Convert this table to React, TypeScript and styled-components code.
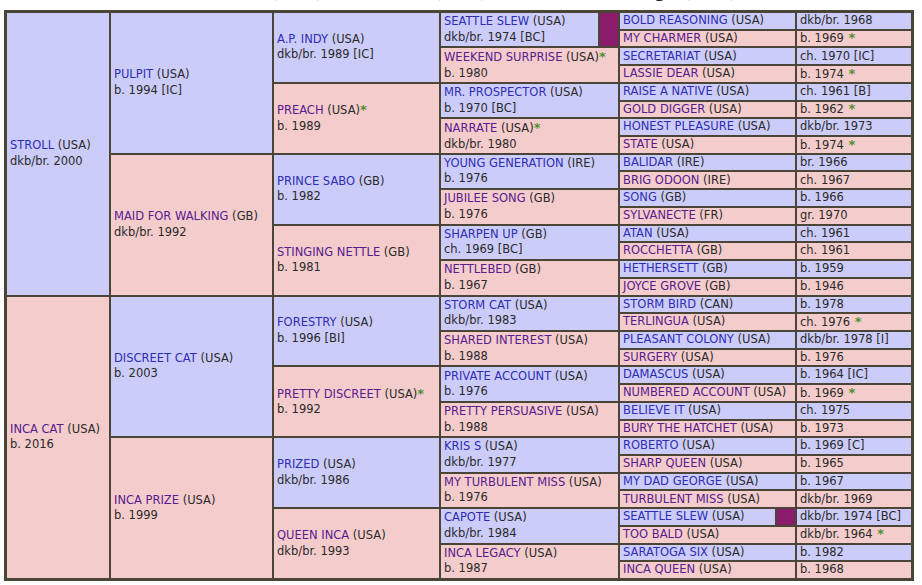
import React from 'react';
import styled, { createGlobalStyle } from 'styled-components';

type Horse = {
	name: string;
	country: string;
	info: string;
	flags: string;
	sire?: Horse;
	dam?: Horse;
};

const L = (name: string, country: string, info: string, flags = ''): Horse => ({ name, country, info, flags });
const H = (name: string, country: string, info: string, sire: Horse, dam: Horse, flags = ''): Horse => ({
	name,
	country,
	info,
	flags,
	sire,
	dam,
});

// column widths, one per generation (the last one is the leaf dates)
const WIDTHS = [102, 161, 165, 177, 175, 114];

const pedigree: Horse[] = [
	H('STROLL', 'USA', 'dkb/br. 2000',
		H('PULPIT', 'USA', 'b. 1994 [IC]',
			H('A.P. INDY', 'USA', 'dkb/br. 1989 [IC]',
				H('SEATTLE SLEW', 'USA', 'dkb/br. 1974 [BC]', L('BOLD REASONING', 'USA', 'dkb/br. 1968'), L('MY CHARMER', 'USA', 'b. 1969', 'i'), 'd'),
				H('WEEKEND SURPRISE', 'USA', 'b. 1980', L('SECRETARIAT', 'USA', 'ch. 1970 [IC]'), L('LASSIE DEAR', 'USA', 'b. 1974', 'i'), 'n')),
			H('PREACH', 'USA', 'b. 1989',
				H('MR. PROSPECTOR', 'USA', 'b. 1970 [BC]', L('RAISE A NATIVE', 'USA', 'ch. 1961 [B]'), L('GOLD DIGGER', 'USA', 'b. 1962', 'i')),
				H('NARRATE', 'USA', 'dkb/br. 1980', L('HONEST PLEASURE', 'USA', 'dkb/br. 1973'), L('STATE', 'USA', 'b. 1974', 'i'), 'n'),
				'n')),
		H('MAID FOR WALKING', 'GB', 'dkb/br. 1992',
			H('PRINCE SABO', 'GB', 'b. 1982',
				H('YOUNG GENERATION', 'IRE', 'b. 1976', L('BALIDAR', 'IRE', 'br. 1966'), L('BRIG ODOON', 'IRE', 'ch. 1967')),
				H('JUBILEE SONG', 'GB', 'b. 1976', L('SONG', 'GB', 'b. 1966'), L('SYLVANECTE', 'FR', 'gr. 1970'))),
			H('STINGING NETTLE', 'GB', 'b. 1981',
				H('SHARPEN UP', 'GB', 'ch. 1969 [BC]', L('ATAN', 'USA', 'ch. 1961'), L('ROCCHETTA', 'GB', 'ch. 1961')),
				H('NETTLEBED', 'GB', 'b. 1967', L('HETHERSETT', 'GB', 'b. 1959'), L('JOYCE GROVE', 'GB', 'b. 1946'))))),
	H('INCA CAT', 'USA', 'b. 2016',
		H('DISCREET CAT', 'USA', 'b. 2003',
			H('FORESTRY', 'USA', 'b. 1996 [BI]',
				H('STORM CAT', 'USA', 'dkb/br. 1983', L('STORM BIRD', 'CAN', 'b. 1978'), L('TERLINGUA', 'USA', 'ch. 1976', 'i')),
				H('SHARED INTEREST', 'USA', 'b. 1988', L('PLEASANT COLONY', 'USA', 'dkb/br. 1978 [I]'), L('SURGERY', 'USA', 'b. 1976'))),
			H('PRETTY DISCREET', 'USA', 'b. 1992',
				H('PRIVATE ACCOUNT', 'USA', 'b. 1976', L('DAMASCUS', 'USA', 'b. 1964 [IC]'), L('NUMBERED ACCOUNT', 'USA', 'b. 1969', 'i')),
				H('PRETTY PERSUASIVE', 'USA', 'b. 1988', L('BELIEVE IT', 'USA', 'ch. 1975'), L('BURY THE HATCHET', 'USA', 'b. 1973')),
				'n')),
		H('INCA PRIZE', 'USA', 'b. 1999',
			H('PRIZED', 'USA', 'dkb/br. 1986',
				H('KRIS S', 'USA', 'dkb/br. 1977', L('ROBERTO', 'USA', 'b. 1969 [C]'), L('SHARP QUEEN', 'USA', 'b. 1965')),
				H('MY TURBULENT MISS', 'USA', 'b. 1976', L('MY DAD GEORGE', 'USA', 'b. 1967'), L('TURBULENT MISS', 'USA', 'dkb/br. 1969'))),
			H('QUEEN INCA', 'USA', 'dkb/br. 1993',
				H('CAPOTE', 'USA', 'dkb/br. 1984', L('SEATTLE SLEW', 'USA', 'dkb/br. 1974 [BC]', 'd'), L('TOO BALD', 'USA', 'dkb/br. 1964', 'i')),
				H('INCA LEGACY', 'USA', 'b. 1987', L('SARATOGA SIX', 'USA', 'b. 1982'), L('INCA QUEEN', 'USA', 'b. 1968'))))),
];

const GlobalStyle = createGlobalStyle`
	html, body {
		margin: 0;
		padding: 0;
		background: #ffffff;
	}
	body {
		font-family: 'DejaVu Sans', Verdana, sans-serif;
		overflow: hidden;
	}
`;

const Page = styled.div`
	width: 922px;
	height: 585px;
	overflow: hidden;
`;

// heading sits mostly above the viewport, only its descenders peek in
const Title = styled.h1`
	margin: -21px 0 0;
	height: 20px;
	font-family: 'Liberation Serif', 'Times New Roman', serif;
	font-size: 20px;
	line-height: 20px;
	font-weight: bold;
	text-align: center;
	color: #222;
	white-space: nowrap;
`;

const Table = styled.div`
	display: flex;
	flex-direction: column;
	gap: 2px;
	box-sizing: border-box;
	width: 910px;
	height: 571px;
	margin: 11px 0 0 4px;
	border: 3px solid #4b4538;
	background: #4b4538;
	font-size: 11.5px;
	line-height: 15.5px;
	color: #2a2a2a;
`;

const Row = styled.div`
	display: flex;
	gap: 2px;
	flex: 1 1 0;
	min-height: 0;
`;

const Parents = styled.div`
	display: flex;
	flex-direction: column;
	gap: 2px;
`;

const Cell = styled.div<{ $w?: number; $dam: boolean }>`
	display: flex;
	flex-direction: column;
	justify-content: center;
	box-sizing: border-box;
	${p => (p.$w ? `width: ${p.$w}px;` : 'flex: 1 1 0;')}
	min-width: 0;
	padding: 0 3px;
	background: ${p => (p.$dam ? '#f5cccc' : '#ccccfa')};
	white-space: nowrap;
	overflow: hidden;
`;

const DupWrap = styled.div<{ $w: number }>`
	display: flex;
	gap: 2px;
	width: ${p => p.$w}px;
`;

const Marker = styled.div`
	width: 18px;
	flex: none;
	background: #8b1c6c;
`;

const Name = styled.span<{ $dam: boolean }>`
	color: ${p => (p.$dam ? '#55208e' : '#2e2eb4')};
`;

const Star = styled.span`
	color: #4f8f2f;
	font-weight: bold;
	font-size: 13px;
`;

const HorseText: React.FC<{ horse: Horse; dam: boolean; withInfo: boolean }> = ({ horse, dam, withInfo }) => (
	<>
		<div>
			<Name $dam={dam}>{horse.name}</Name> ({horse.country})
			{horse.flags.includes('n') && <Star>*</Star>}
		</div>
		{withInfo && <div>{horse.info}</div>}
	</>
);

const Branch: React.FC<{ horse: Horse; gen: number; dam: boolean }> = ({ horse, gen, dam }) => {
	const width = WIDTHS[gen];
	const dup = horse.flags.includes('d');
	const leaf = !horse.sire || !horse.dam;

	const nameCell = dup ? (
		<DupWrap $w={width}>
			<Cell $dam={dam}>
				<HorseText horse={horse} dam={dam} withInfo={!leaf} />
			</Cell>
			<Marker />
		</DupWrap>
	) : (
		<Cell $w={width} $dam={dam}>
			<HorseText horse={horse} dam={dam} withInfo={!leaf} />
		</Cell>
	);

	if (leaf) {
		return (
			<Row>
				{nameCell}
				<Cell $w={WIDTHS[gen + 1]} $dam={dam}>
					<div>
						{horse.info}
						{horse.flags.includes('i') && <Star> *</Star>}
					</div>
				</Cell>
			</Row>
		);
	}

	return (
		<Row>
			{nameCell}
			<Parents>
				<Branch horse={horse.sire!} gen={gen + 1} dam={false} />
				<Branch horse={horse.dam!} gen={gen + 1} dam={true} />
			</Parents>
		</Row>
	);
};

export default function App() {
	return (
		<Page>
			<GlobalStyle />
			<Title>STROLL (USA), INCA CAT (USA), 2016 FILLY Lineage, (USA)</Title>
			<Table>
				{pedigree.map((horse, i) => (
					<Branch key={horse.name} horse={horse} gen={0} dam={i === 1} />
				))}
			</Table>
		</Page>
	);
}
